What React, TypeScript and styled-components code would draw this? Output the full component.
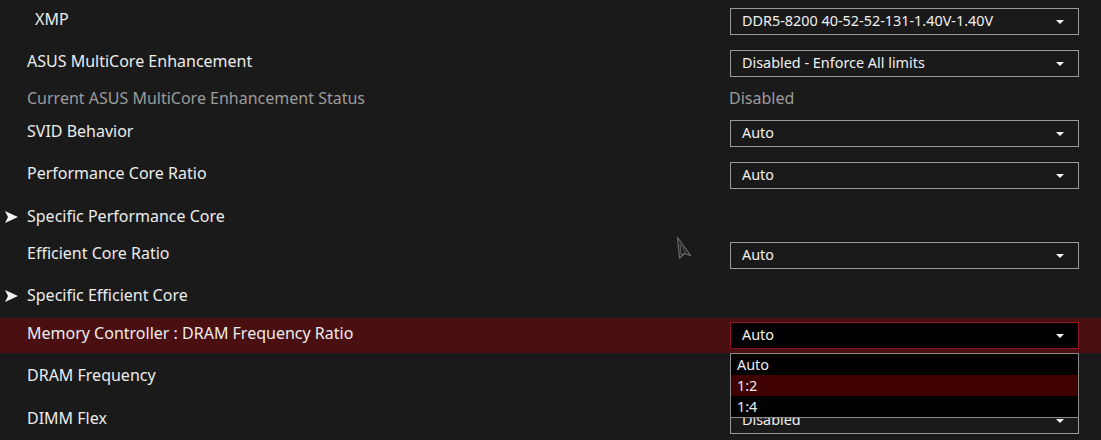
import React from "react";
import styled, { createGlobalStyle } from "styled-components";

const Global = createGlobalStyle`
  html, body { margin: 0; padding: 0; background: #1a1a1a; }
  body { font-family: "Noto Sans", "Open Sans", sans-serif; }
`;

const Page = styled.div`
  position: relative;
  width: 1101px;
  height: 440px;
  overflow: hidden;
  background: #1a1a1a;
  display: flex;
  flex-direction: column;
`;

const Row = styled.div<{ $h: number; $top?: number; $active?: boolean }>`
  box-sizing: border-box;
  height: ${(p) => p.$h}px;
  padding-top: ${(p) => p.$top ?? 0}px;
  flex: none;
  display: flex;
  align-items: center;
  background: ${(p) => (p.$active ? "#4a1011" : "transparent")};
`;

const Label = styled.div<{ $muted?: boolean; $indent?: number }>`
  flex: 1;
  display: flex;
  align-items: center;
  padding-left: ${(p) => p.$indent ?? 27}px;
  padding-bottom: 5px;
  font-size: 16px;
  color: ${(p) => (p.$muted ? "#9c9c9c" : "#ececec")};
  position: relative;
`;

const Arrow = styled.svg`
  position: absolute;
  left: 5px;
  top: 50%;
  margin-top: -7px;
`;

const Control = styled.div`
  width: 349px;
  margin-right: 22px;
  position: relative;
`;

const Select = styled.div<{ $active?: boolean }>`
  box-sizing: border-box;
  height: 27px;
  border: 1px solid ${(p) => (p.$active ? "#8e1524" : "#9a9a9a")};
  background: ${(p) => (p.$active ? "#000" : "transparent")};
  display: flex;
  align-items: center;
  justify-content: space-between;
  padding: 0 14px 2px 11px;
  font-size: 14.4px;
  color: #f0f0f0;
`;

const Caret = styled.span`
  width: 0;
  height: 0;
  border-left: 4px solid transparent;
  border-right: 4px solid transparent;
  border-top: 4px solid #f4f4f4;
  margin-top: 3px;
`;

const Value = styled.div`
  font-size: 16px;
  color: #9c9c9c;
  padding-bottom: 5px;
  margin-left: -1px;
`;

const Popup = styled.div`
  position: absolute;
  left: 0;
  right: 0;
  top: 31px;
  box-sizing: border-box;
  border: 1px solid #8a8a8a;
  background: #000;
  z-index: 2;
`;

const Option = styled.div<{ $sel?: boolean }>`
  height: 21px;
  display: flex;
  align-items: center;
  padding-left: 6px;
  padding-bottom: 1px;
  box-sizing: border-box;
  font-size: 14.4px;
  color: #ececec;
  background: ${(p) => (p.$sel ? "#3f0000" : "transparent")};
`;

const Cursor = styled.svg`
  position: absolute;
  left: 676px;
  top: 236px;
`;

type Item = {
  label: string;
  h: number;
  top?: number;
  kind: "select" | "value" | "sub";
  value?: string;
  muted?: boolean;
  indent?: number;
  active?: boolean;
  popup?: string[];
};

const items: Item[] = [
  { label: "XMP", h: 42, kind: "select", value: "DDR5-8200 40-52-52-131-1.40V-1.40V", indent: 35 },
  { label: "ASUS MultiCore Enhancement", h: 42, kind: "select", value: "Disabled - Enforce All limits" },
  { label: "Current ASUS MultiCore Enhancement Status", h: 28, top: 4, kind: "value", value: "Disabled", muted: true },
  { label: "SVID Behavior", h: 42, kind: "select", value: "Auto" },
  { label: "Performance Core Ratio", h: 42, kind: "select", value: "Auto" },
  { label: "Specific Performance Core", h: 40, top: 4, kind: "sub" },
  { label: "Efficient Core Ratio", h: 38, kind: "select", value: "Auto" },
  { label: "Specific Efficient Core", h: 44, top: 2, kind: "sub" },
  {
    label: "Memory Controller : DRAM Frequency Ratio",
    h: 35,
    kind: "select",
    value: "Auto",
    active: true,
    popup: ["Auto", "1:2", "1:4"],
  },
  { label: "DRAM Frequency", h: 49, kind: "select", value: "Auto" },
  { label: "DIMM Flex", h: 37, kind: "select", value: "Disabled" },
];

export default function App() {
  return (
    <>
      <Global />
      <Page>
        {items.map((it) => (
          <Row key={it.label} $h={it.h} $top={it.top} $active={it.active}>
            <Label $muted={it.muted} $indent={it.indent}>
              {it.kind === "sub" && (
                <Arrow width="13" height="12" viewBox="0 0 13 12">
                  <polygon points="0,0 13,6 0,12 3,6" fill="#f2f2f2" />
                </Arrow>
              )}
              {it.label}
            </Label>
            <Control>
              {it.kind === "select" && (
                <Select $active={it.active}>
                  <span>{it.value}</span>
                  <Caret />
                </Select>
              )}
              {it.kind === "value" && <Value>{it.value}</Value>}
              {it.popup && (
                <Popup>
                  {it.popup.map((o) => (
                    <Option key={o} $sel={o === "1:2"}>
                      {o}
                    </Option>
                  ))}
                </Popup>
              )}
            </Control>
          </Row>
        ))}
        <Cursor width="16" height="24" viewBox="0 0 16 24">
          <path
            d="M1.5 1.5 L14.5 19.5 L8.5 17.5 L3.5 22 Z"
            fill="none"
            stroke="#6e6e6e"
            strokeWidth="1.2"
            strokeLinejoin="round"
          />
          <path d="M4 8 L9.5 16.5 L5 19 Z" fill="none" stroke="#5a5a5a" strokeWidth="1" />
        </Cursor>
      </Page>
    </>
  );
}
